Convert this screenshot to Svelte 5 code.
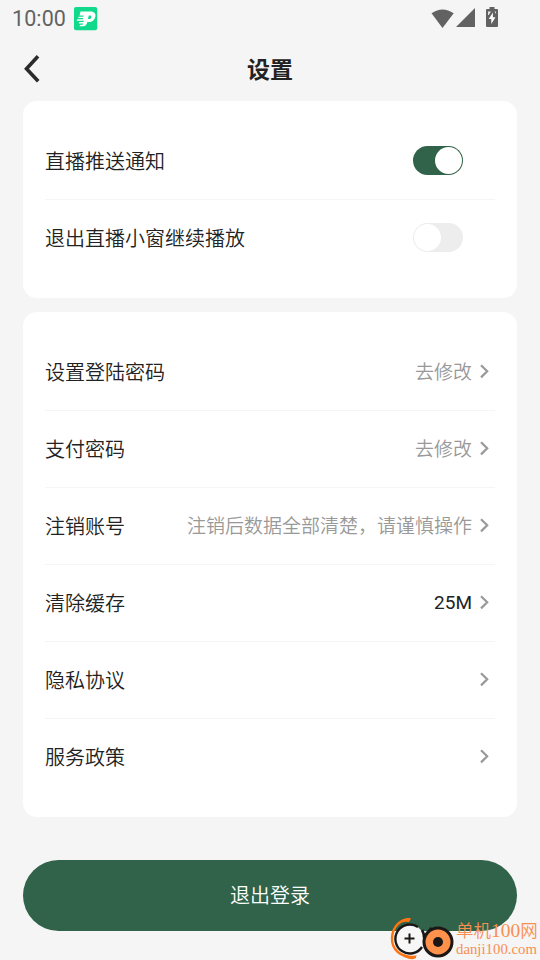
<script>
	let switches = $state([
		{ label: '直播推送通知', on: true },
		{ label: '退出直播小窗继续播放', on: false }
	]);

	const items = [
		{ label: '设置登陆密码', value: '去修改' },
		{ label: '支付密码', value: '去修改' },
		{ label: '注销账号', value: '注销后数据全部清楚，请谨慎操作' },
		{ label: '清除缓存', value: '25M', dark: true },
		{ label: '隐私协议', value: '' },
		{ label: '服务政策', value: '' }
	];
</script>

<div class="page">
	<div class="status">
		<span class="time">10:00</span>
		<svg class="app-icon" width="24" height="24" viewBox="0 0 24 24">
			<rect x="0" y="0" width="23.2" height="23.2" rx="2" fill="#10d98c" />
			<path d="M6.500 4.400H16c4 0 6 2 5.400 5-.6 3.300-3.200 5.600-6.600 5.600h-1.600l.6-3h1.200c1.300 0 2.200-.7 2.400-1.800.2-1.200-.5-1.800-1.700-1.800h-.9l-1.500 6.600c-.5 2.600-1.700 4.200-4 4.200H5.300l1-1.500h2.300l.5-1.300H4.600l.8-1.400h4.100l.4-1.200H2.600l.8-1.500h5.500l.3-1.200H4l.8-1.400h4.600l.3-1.300H5.500z" fill="#fff" />
		</svg>
		<div class="signals">
			<svg width="24" height="20" viewBox="0 0 24 20">
				<path d="M0.500 4.300Q11.500 -3.400 22.700 4.300L11.500 19z" fill="#626262" />
			</svg>
			<svg class="cell" width="19" height="19" viewBox="0 0 19 19">
				<path d="M19 0v19H0z" fill="#626262" />
			</svg>
			<svg class="battery" width="12" height="20" viewBox="0 0 12 20">
				<path d="M3.500 0h5v2H11q1 0 1 1v16q0 1-1 1H1q-1 0-1-1V3q0-1 1-1h2.500z" fill="#626262" />
				<path d="M6.900 5.500L2.700 12h2.600v5l4.200-6.700H6.900z" fill="#fff" />
				<path d="M2 4.500h3L2.800 8H2zM8.500 4.500H10V7z" fill="#e5e5e5" />
			</svg>
		</div>
	</div>

	<header>
		<svg class="back" width="18" height="30" viewBox="0 0 18 30">
			<path d="M15 2.200L3.500 14.700 15.200 27.300" fill="none" stroke="#2b2b2b" stroke-width="3.600" />
		</svg>
		<h1>设置</h1>
	</header>

	<section class="card">
		{#each switches as item}
			<div class="row">
				<span>{item.label}</span>
				<button class="switch" class:on={item.on} aria-label={item.label} onclick={() => (item.on = !item.on)}>
					<i></i>
				</button>
			</div>
		{/each}
	</section>

	<section class="card">
		{#each items as item}
			<div class="row">
				<span>{item.label}</span>
				<span class="value" class:dark={item.dark}>{item.value}</span>
				<svg class="arrow" width="10" height="16" viewBox="0 0 10 16">
					<path d="M1 2.200L7.200 8.300 1 14.400" fill="none" stroke="#999" stroke-width="2.200" />
				</svg>
			</div>
		{/each}
	</section>

	<button class="logout">退出登录</button>

	<div class="watermark">
		<svg width="66" height="44" viewBox="0 0 66 44">
			<path d="M21 2.500C11 2 3.500 10 3 21s8 20 24 19" fill="none" stroke="#ff7412" stroke-width="2.400" />
			<path d="M7 8C12 2 18 0 22 1.500L20 5Q13 3.500 7 8zM10 36Q17 40 28 38.500L25 42Q17 43 10 36z" fill="#ff7412" />
			<circle cx="21" cy="22" r="14" fill="#f7f7f7" />
			<path d="M29 10A14.500 14.500 0 1 0 33 30" fill="none" stroke="#1c1717" stroke-width="2.400" />
			<path d="M33 13Q35.500 17 35 21" fill="none" stroke="#1c1717" stroke-width="2.600" />
			<path d="M15.500 21.500h10M20.500 16.500v10" stroke="#1c1717" stroke-width="2" />
			<circle cx="49" cy="25" r="14" fill="#ff914b" stroke="#1c1717" stroke-width="3" />
			<path d="M37 17l3-4M42 10.500l-2 4" stroke="#1c1717" stroke-width="2" />
			<circle cx="49" cy="25" r="5" fill="#1c1717" />
		</svg>
		<div class="site">
			<div class="name">单机<b>100</b>网</div>
			<div class="domain">danji100.com</div>
		</div>
	</div>
</div>

<style>
	:global(body) {
		background: #f5f5f5;
	}

	.page {
		position: relative;
		box-sizing: border-box;
		width: 540px;
		height: 960px;
		padding: 0 23px;
		overflow: hidden;
		background: #f5f5f5;
		color: #222;
		font-family: Roboto, 'Noto Sans CJK SC', sans-serif;
		font-size: 20px;
		font-weight: 350;
	}

	.status {
		display: flex;
		align-items: center;
		height: 37px;
		margin: 0 -11px;
	}

	.time {
		width: 62px;
		color: #626262;
		font-size: 21.500px;
		font-weight: 400;
		letter-spacing: 0.1px;
	}

	.signals {
		display: flex;
		align-items: center;
		margin-left: auto;
		margin-right: 30px;
	}

	.cell {
		margin-left: 1px;
		margin-top: -2px;
	}

	.battery {
		margin-left: 11px;
		margin-top: -3px;
	}

	header {
		display: flex;
		align-items: center;
		height: 64px;
	}

	.back {
		flex: none;
	}

	h1 {
		flex: 1;
		margin: 3px 18px 0 0;
		font-size: 23px;
		line-height: 32px;
		font-weight: 700;
		text-align: center;
	}

	.card {
		margin-bottom: 14px;
		padding: 22px 22px 21px;
		border-radius: 14px;
		background: #fff;
	}

	.row {
		display: flex;
		align-items: center;
		box-sizing: border-box;
		height: 77px;
		padding-bottom: 2px;
		border-bottom: 1px solid #f5f5f5;
		white-space: nowrap;
	}

	.row:last-child {
		border-bottom-color: transparent;
	}

	.switch {
		display: flex;
		box-sizing: border-box;
		width: 50px;
		height: 29px;
		margin-left: auto;
		margin-right: 32px;
		padding: 1px;
		border: 0;
		border-radius: 15px;
		background: #ededed;
	}

	.switch i {
		width: 27px;
		height: 27px;
		border-radius: 50%;
		background: #fff;
	}

	.switch.on {
		justify-content: flex-end;
		background: #306349;
	}

	.value {
		margin-left: auto;
		margin-bottom: 1px;
		color: #999;
		font-size: 19px;
	}

	.value.dark {
		margin-bottom: 0;
		color: #222;
		font-weight: 400;
	}

	.arrow {
		margin-left: 8px;
		margin-right: 5px;
	}

	.logout {
		display: block;
		width: 100%;
		height: 71px;
		margin-top: 43px;
		padding: 0 0 2px;
		border: 0;
		border-radius: 36px;
		background: #306349;
		color: #fff;
		font: inherit;
	}

	.watermark {
		position: absolute;
		left: 389px;
		top: 917px;
		display: flex;
		color: #f98e50;
	}

	.site {
		margin-left: 1px;
		white-space: nowrap;
	}

	.name {
		height: 24px;
		font-family: 'Liberation Serif', 'Noto Sans CJK SC', serif;
		font-size: 17.500px;
		line-height: 28px;
	}

	.name b {
		font-size: 19.500px;
		font-weight: 400;
	}

	.domain {
		font-family: 'Liberation Serif', serif;
		font-size: 14.800px;
		line-height: 17px;
	}
</style>
